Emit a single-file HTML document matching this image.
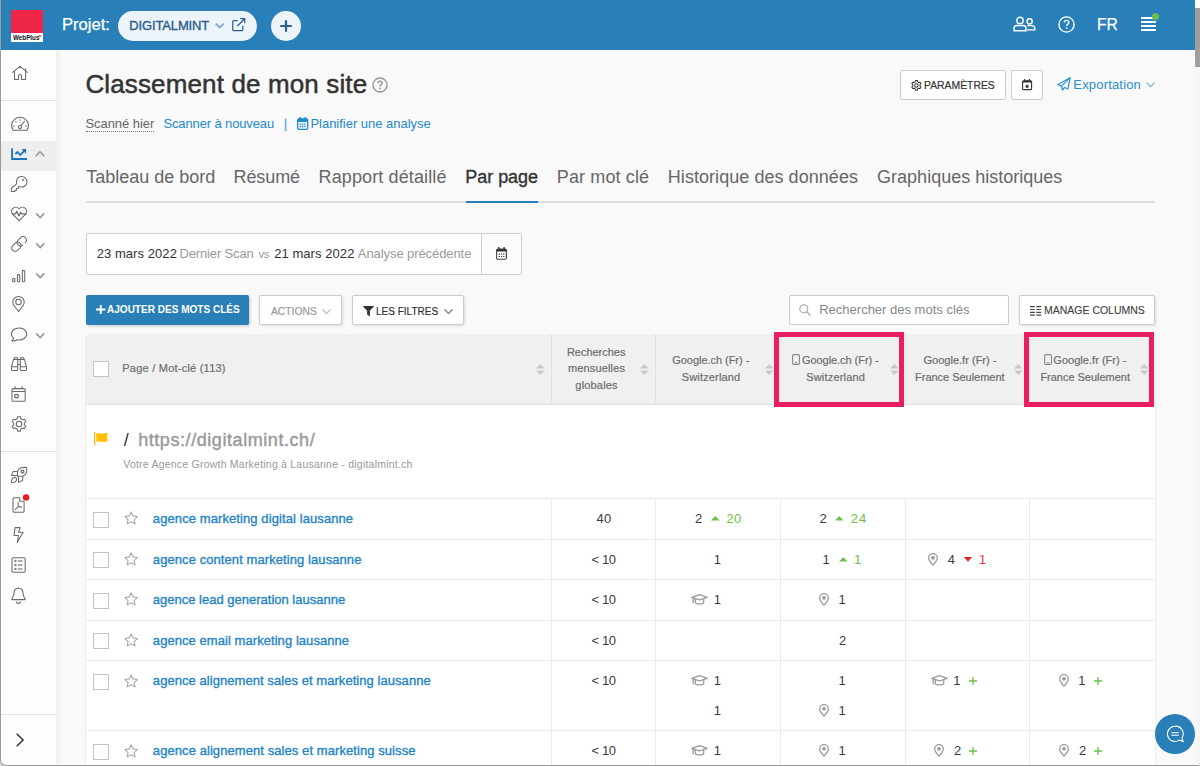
<!DOCTYPE html>
<html lang="fr">
<head>
<meta charset="utf-8">
<title>Classement de mon site</title>
<style>
*{box-sizing:border-box;margin:0;padding:0}
html,body{width:1200px;height:766px;overflow:hidden;background:#f9f9f9;font-family:"Liberation Sans",sans-serif;color:#333;font-size:13px}
body{position:relative}
.abs{position:absolute}
svg{display:block;overflow:visible;position:absolute}
.t{position:absolute;white-space:nowrap}
.m{-webkit-text-stroke:.35px currentColor}
/* window frame */
#frame-left{left:0;top:0;width:1200px;height:766px;border-left:1px solid #9a9a9a;border-bottom:1px solid #999;border-radius:0 0 3px 6px;box-shadow:0 0 0 8px #d4d7d7;z-index:50;pointer-events:none}
#frame-bottom{display:none}
#scroll{left:1195px;top:0;width:5px;height:766px;background:linear-gradient(#fbfbfb 0 8px,#f6f6f6 8px);z-index:40}
#scroll i{position:absolute;left:0;top:8px;width:5px;height:58.5px;background:#9e9e9e}
/* top bar */
#top{left:1px;top:0;width:1194px;height:50px;background:#2980b9;z-index:20}
#logo{left:10px;top:10px;width:32px;height:32px;background:#ee2547}
#logo b{position:absolute;left:0;bottom:0;width:32px;height:8.8px;background:#fff}
#logo i{position:absolute;left:28px;top:25px;width:2px;height:2px;border-radius:50%;background:#ee2547}
#projet{left:62px;top:13px;font-size:18px;line-height:22px;color:#fff;white-space:nowrap}
#pill{left:117px;top:11px;width:139px;height:30px;border-radius:15px;background:#ecf3f9;color:#2a5d8c;font-size:13px;line-height:30px;padding-left:13px;white-space:nowrap}
#plus{left:270px;top:10.7px;width:30px;height:30px;border-radius:15px;background:#ecf3f9}
#fr{left:1096px;top:14px;font-size:17px;line-height:20px;color:#fff}
/* sidebar */
#side{left:1px;top:50px;width:55px;height:716px;background:#fdfdfd;box-shadow:2px 0 6px rgba(0,0,0,.065);z-index:10}
#side .sep{position:absolute;left:0;width:55px;height:1px;background:#e0e0e0}
#side .act{position:absolute;left:0;top:91px;width:55px;height:30px;background:#eee}
/* content */
#main{left:0;top:0;width:1195px;height:766px}
h1{position:absolute;left:86px;top:68px;font-size:26px;line-height:32px;font-weight:400;color:#333;white-space:nowrap}
.btn{position:absolute;background:#fff;border:1px solid #ccc;border-radius:2px;font-size:12px;color:#333;white-space:nowrap;box-shadow:1px 1px 3px rgba(0,0,0,.12)}
.btn.ns{box-shadow:none}
a{color:#2188c9;text-decoration:none}
#sub span,#sub a{position:absolute;top:0;font-size:13px;line-height:18px;white-space:nowrap}
#sub{left:86px;top:115px;height:18px;width:400px}
#tabs{left:86px;top:158px;width:1069px;height:45px;border-bottom:2px solid #ddd}
#tabs span{position:absolute;top:6px;font-size:18px;line-height:26px;color:#666;white-space:nowrap}
#tabs span.on{color:#333}
#tabs i{position:absolute;left:380px;top:43px;width:71.5px;height:2px;background:#2980b9}
#date{left:86px;top:233px;width:436px;height:42px;background:#fff;border:1px solid #ccc;border-radius:2px;font-size:13px;color:#333}
#date span{position:absolute;top:0;line-height:40px;white-space:nowrap}
#date em{font-style:normal;color:#999}
#date .cal{position:absolute;left:394px;top:0;width:40px;height:40px;border-left:1px solid #ccc;background:#fcfcfc}
/* table */
#tbl{left:86px;top:334px;width:1069px;height:432px;background:#fff;box-shadow:-1px 0 0 #ececec,1px 0 0 #ececec}
#thead{left:0;top:0;width:1069px;height:70px;background:#f0f0f0;border-radius:3px 3px 0 0}
.th{position:absolute;font-size:11px;line-height:16.5px;color:#666;text-align:center;white-space:nowrap}
.hs{position:absolute;top:0;width:1px;height:70px;background:#e2e2e2}
.hl{position:absolute;border:5px solid #e91e63;z-index:5}
.hr{position:absolute;left:0;width:1069px;height:1px;background:#ebebeb}
.vl{position:absolute;top:215px;width:1px;height:217px;background:#ebebeb}
.cb{position:absolute;left:7px;width:16px;height:16px;border:1px solid #c4c4c4;background:#fff}
.kw{position:absolute;left:67px;font-size:14px;line-height:18px;color:#2484c6;white-space:nowrap}
.n{position:absolute;font-size:13px;line-height:18px;color:#333;white-space:nowrap}
.g{color:#6cc04a}
.r{color:#e53935}
#chat{left:1155px;top:714px;width:40px;height:40px;border-radius:20px;background:#2980b9;z-index:30}
</style>
</head>
<body>
<div id="frame-left" class="abs"></div>
<div id="frame-bottom" class="abs"></div>
<div id="scroll" class="abs"><i></i></div>
<div id="top" class="abs">
  <div id="logo" class="abs"><b></b><span class="t" style="left:1.69px;top:21px;font-size:7.2px;line-height:13px;color:#111;transform:scaleX(0.8757);transform-origin:0 0;font-weight:700">WebPlus</span><i></i></div>
  <span class="t" style="left:61.24px;top:13px;font-size:17px;line-height:23px;color:#fff;transform:scaleX(0.9765);transform-origin:0 0;-webkit-text-stroke:.25px #fff">Projet:</span>
  <div id="pill" class="abs"><span class="t m" style="left:11.23px;top:5px;font-size:13px;line-height:19px;color:#2a5d8c;letter-spacing:-0.131px">DIGITALMINT</span>
    <svg style="left:96.5px;top:12.3px" width="9.4" height="5.6" viewBox="0 0 10 6"><path d="M0.7 0.7 L5 5 L9.3 0.7" fill="none" stroke="#7ea3c4" stroke-width="1.7"/></svg>
    <svg style="left:114px;top:7.3px" width="13.4" height="13.4" viewBox="0 0 14 14"><path d="M11.3 8v4.2a1 1 0 0 1-1 1H1.8a1 1 0 0 1-1-1V3.7a1 1 0 0 1 1-1H6" fill="none" stroke="#2a5d8c" stroke-width="1.3"/><path d="M8.6 0.7h4.7v4.7M13.2 0.8L5.6 8.4" fill="none" stroke="#2a5d8c" stroke-width="1.3"/></svg>
  </div>
  <div id="plus" class="abs"><svg style="left:9px;top:9px" width="12" height="12" viewBox="0 0 12 12"><path d="M6 0.3v11.4M0.3 6h11.4" stroke="#2a5d8c" stroke-width="2.2" fill="none"/></svg></div>
  <svg style="left:1012px;top:16px" width="23" height="16" viewBox="0 0 23 16"><g fill="none" stroke="#fff" stroke-width="1.4"><circle cx="7" cy="4.4" r="3.2"/><path d="M1 14.8v-2.3c0-1.7 1.4-3 3-3h6c1.7 0 3 1.3 3 3v2.3z"/><circle cx="16.6" cy="5.4" r="2.6"/><path d="M14.2 9.6h4.6c1.7 0 3 1.3 3 2.9v1.4h-7.6"/></g></svg>
  <svg style="left:1057px;top:16px" width="17" height="17" viewBox="0 0 17 17"><circle cx="8.5" cy="8.5" r="7.6" fill="none" stroke="#fff" stroke-width="1.4"/><path d="M6.3 6.6c0-1.3 1-2.2 2.3-2.2s2.2.9 2.2 2c0 1.7-2.2 1.7-2.2 3.6" fill="none" stroke="#fff" stroke-width="1.4"/><circle cx="8.6" cy="12.1" r=".95" fill="#fff"/></svg>
  <span class="t" style="left:1096.42px;top:13px;font-size:17px;line-height:23px;color:#fff;transform:scaleX(0.9181);transform-origin:0 0;-webkit-text-stroke:.25px #fff">FR</span>
  <div class="abs" style="left:1140px;top:17px;width:15px;height:14px;background:linear-gradient(#fff 0 2px,transparent 2px 4px,#fff 4px 6px,transparent 6px 8px,#fff 8px 10px,transparent 10px 12px,#fff 12px 14px)"></div>
  <div class="abs" style="left:1150.5px;top:12.5px;width:7px;height:7px;border-radius:50%;background:#6cc04a"></div>
</div>
<div id="side" class="abs">
  <div class="sep" style="top:50px"></div>
  <div class="act"></div>
  <div class="sep" style="top:401px"></div>
  <div class="sep" style="top:664px"></div>
  <svg style="left:-1px;top:-50px" width="56" height="766" viewBox="0 0 56 766" fill="none" stroke="#6a6a6a" stroke-width="1.05" stroke-linejoin="round">
    <!-- home -->
    <path d="M12.3 72.7L20 66.3L27.8 72.7M25.5 68.3V70.8M14.5 71.3V79.4H18.6V75.6a.8.8 0 0 1 .8-.8h1.3a.8.8 0 0 1 .8.8V79.4H25.6V71.3"/>
    <!-- gauge -->
    <path d="M13.1 130.3a8.4 8.4 0 1 1 13.9 0z"/>
    <circle cx="20" cy="127" r="1.6"/><path d="M21.1 125.8L24.5 121.2" stroke-linecap="round"/>
    <g fill="#999" stroke="none"><rect x="19.3" y="119.3" width="1.5" height="1.5"/><rect x="15.1" y="121" width="1.4" height="1.4"/><rect x="13.2" y="125.3" width="1.5" height="1.5"/><rect x="25.3" y="125.3" width="1.5" height="1.5"/></g>
    <!-- chart line (active) -->
    <g stroke="#1a73bc" fill="none"><path d="M12.1 148.2V159H27" stroke-width="1.8" stroke-linejoin="miter"/><path d="M15.4 154.2L17.4 152L20.2 155L24.2 150.8" stroke-width="1.8" stroke-linejoin="miter"/><path d="M21.6 149.1H26.1V153.7z" fill="#1a73bc" stroke="none"/></g>
    <path d="M35.8 156.1L40 151.8L44.2 156.1" stroke="#999" stroke-width="1.6"/>
    <!-- key -->
    <path d="M16.7 183.6a5.3 5.3 0 1 1 3.3 3.2h-1.7v1.7h-1.8v1.7h-1.7v1.4h-3.5v-3.1z"/>
    <circle cx="22.9" cy="180" r="1.3" fill="#999" stroke="none"/>
    <!-- heartbeat -->
    <path d="M19.1 220.7L12.8 214.4a4.1 4.1 0 0 1 5.8-5.9l.5.5.5-.5a4.1 4.1 0 0 1 5.8 5.9z"/>
    <path d="M12 213.8h3.6l1.2-2.6 2.1 4.7 1.8-3.6.7 1.5h5" stroke-width="1.2"/>
    <path d="M36.2 213.4L40.2 217.60000000000002L44.2 213.4" stroke="#999" stroke-width="1.6"/>
    <!-- link -->
    <rect x="11.3" y="243.4" width="10.2" height="6.8" rx="3.4" transform="rotate(-45 16.4 246.8)"/><path d="M20.3 244.7h-.2a3.4 3.4 0 0 1-3.4-3.4 3.4 3.4 0 0 1 3.4-3.4h3.4a3.4 3.4 0 0 1 3.4 3.4 3.4 3.4 0 0 1-3.4 3.4h-.6" transform="rotate(-45 21.8 241.3)"/>
    <path d="M36.2 243.4L40.2 247.60000000000002L44.2 243.4" stroke="#999" stroke-width="1.6"/>
    <!-- bars -->
    <rect x="12.6" y="278.5" width="2.3" height="3.3" rx=".5"/><rect x="17.4" y="274.6" width="2.3" height="7.2" rx=".5"/><rect x="22.4" y="270.6" width="2.3" height="11.2" rx=".5"/>
    <path d="M36.2 273.40000000000003L40.2 277.6L44.2 273.40000000000003" stroke="#999" stroke-width="1.6"/>
    <!-- pin -->
    <path d="M18.5 311.5C16.5 308.5 12.8 305.5 12.8 302.2a5.7 5.7 0 0 1 11.4 0c0 3.3-3.7 6.3-5.7 9.3z"/><circle cx="18.5" cy="302" r="2.7"/>
    <!-- comment -->
    <path d="M13.6 338.1a7.6 6 0 1 1 3.7 1.7c-1.5 1-3 1.3-5.4 1.1 1-.8 1.5-1.7 1.7-2.8z"/>
    <path d="M36.2 333.40000000000003L40.2 337.6L44.2 333.40000000000003" stroke="#999" stroke-width="1.6"/>
    <!-- binoculars -->
    <path d="M14.2 359.4v-1.6h3.4v1.6M20.4 359.4v-1.6h3.4v1.6M13.6 359.4h4.1v10.3a.9.9 0 0 1-.9.9h-4.3a.9.9 0 0 1-.9-.9v-3.3zM24.4 359.4h-4.1v10.3a.9.9 0 0 0 .9.9h4.3a.9.9 0 0 0 .9-.9v-3.3zM11.6 366.8h6.1M20.3 366.8h6.1M17.7 359.4h2.6M17.7 364.4h2.6"/>
    <!-- calendar -->
    <rect x="12" y="388.6" width="13.2" height="12.7" rx="1.4"/><path d="M12 391.4h13.2M15 386.2v2.4M22.1 386.2v2.4" /><rect x="14.8" y="394.6" width="3.4" height="3" rx=".4" stroke-width="1.2"/>
    <!-- gear -->
    <path d="M17.7 416.7h2.6l.6 2.1 1.5.9 2.1-.5 1.3 2.2-1.5 1.6v1.8l1.5 1.6-1.3 2.2-2.1-.5-1.5.9-.6 2.1h-2.6l-.6-2.1-1.5-.9-2.1.5-1.3-2.2 1.5-1.6v-1.8l-1.5-1.6 1.3-2.2 2.1.5 1.5-.9z"/><circle cx="19" cy="424" r="2.7"/>
    <!-- rocket -->
    <path d="M21 467.7C23 467.4 25.3 467.3 26.7 467.5C26.9 469 26.9 470.8 26.5 472.3C25.9 474.3 24.6 475.6 22.8 476.3L17.5 476.3L17.5 471.4C18.2 469.6 19.3 468.3 21 467.7Z"/><rect x="21.2" y="470.3" width="2.6" height="2.5" rx=".7" stroke-width="1.2"/>
    <path d="M17.4 471.4H13.3L11.5 475.4H17.4M22.7 476.4V480.3L18.5 482.4V476.4"/><path d="M11.5 482.5C11.2 480.3 11.9 477.6 14.4 477.4C15.8 477.3 16.7 478.1 16.6 479.5C16.4 481.8 14 482.7 11.5 482.5Z"/>
    <!-- pdf -->
    <path d="M19.8 497.8h-5.7a1.1 1.1 0 0 0-1.1 1.1v12.2a1.1 1.1 0 0 0 1.1 1.1h8.9a1.1 1.1 0 0 0 1.1-1.1v-9.8h-4.3z"/><path d="M18 502.4c.3 1.6.3 2.9.1 4.1m0 0c-.8 1.3-1.8 2.3-3 3.3m3-3.3c1.3.3 2.4.5 3.6.5" stroke-linecap="round"/>
    <circle cx="26.1" cy="497.4" r="3.2" fill="#e0201c" stroke="none"/>
    <!-- bolt -->
    <path d="M15 527.6h5.2l-1.6 4.7h4.5l-5.9 10.2 1.3-7h-4.5z"/>
    <!-- list -->
    <rect x="12" y="557.8" width="13.2" height="14.4" rx="1.2"/><g fill="#888" stroke="none"><circle cx="15.4" cy="561" r="1.3"/><circle cx="15.4" cy="565" r="1.3"/><circle cx="15.4" cy="569" r="1.3"/><rect x="18" y="560.3" width="4.5" height="1.4"/><rect x="18" y="564.3" width="4.5" height="1.4"/><rect x="18" y="568.3" width="4.5" height="1.4"/></g>
    <!-- bell -->
    <path d="M18.5 587.4v.9M18.5 588.3c-2.9 0-4.5 2.1-4.5 4.8 0 3.5-1.1 4.5-2.2 5.7-.3.4 0 .8.5.8h12.4c.5 0 .8-.4.5-.8-1.1-1.2-2.2-2.2-2.2-5.7 0-2.7-1.6-4.8-4.5-4.8zM16.5 601.5a2 2 0 0 0 4 0"/>
    <!-- chevron right -->
    <path d="M16.7 733.7L23.1 740L16.7 746.3" stroke="#333" stroke-width="1.5" stroke-linejoin="miter"/>
  </svg>
</div>
<div id="main" class="abs">

<span class="t m" style="left:85.38px;top:67px;font-size:26px;line-height:34px;color:#333;letter-spacing:0.137px;-webkit-text-stroke-width:.5px">Classement de mon site</span>
<svg style="left:372px;top:77px" width="16" height="16" viewBox="0 0 16 16"><circle cx="8" cy="8" r="7" fill="none" stroke="#999" stroke-width="1.4"/><path d="M5.9 6.3c0-1.2.9-2 2.1-2s2.1.8 2.1 1.9c0 1.5-2.1 1.6-2.1 3.2" fill="none" stroke="#999" stroke-width="1.5"/><circle cx="8" cy="11.5" r=".95" fill="#999"/></svg>

<div class="btn ns" style="left:900px;top:70px;width:106px;height:30px">
  <svg style="left:10.3px;top:8.7px" width="10.8" height="10.8" viewBox="11 416 16 16"><path d="M17.7 416.7h2.6l.6 2.1 1.5.9 2.1-.5 1.3 2.2-1.5 1.6v1.8l1.5 1.6-1.3 2.2-2.1-.5-1.5.9-.6 2.1h-2.6l-.6-2.1-1.5-.9-2.1.5-1.3-2.2 1.5-1.6v-1.8l-1.5-1.6 1.3-2.2 2.1.5 1.5-.9z" fill="none" stroke="#333" stroke-width="1.5" stroke-linejoin="round"/><circle cx="19" cy="424" r="2.6" fill="none" stroke="#333" stroke-width="1.5"/></svg>
  <span class="t" style="left:23.45px;top:6px;font-size:11px;line-height:16px;color:#333;transform:scaleX(0.9433);transform-origin:0 0;-webkit-text-stroke:.2px #333">PARAMÈTRES</span>
</div>
<div class="btn ns" style="left:1011px;top:70px;width:32px;height:30px">
  <svg style="left:10.2px;top:8.3px" width="10.2" height="11.3" viewBox="0 0 11 12"><rect x=".65" y="1.9" width="9.7" height="9.5" rx="1.1" fill="none" stroke="#333" stroke-width="1.2"/><path d="M.65 2.9a1 1 0 0 1 1-1h7.7a1 1 0 0 1 1 1v.9H.65z" fill="#333"/><path d="M3 0v2.5M8 0v2.5" stroke="#333" stroke-width="1.3"/><path d="M5.5 5.4l.75 1.5 1.65.2-1.2 1.15.3 1.65-1.5-.8-1.5.8.3-1.65-1.2-1.15 1.65-.2z" fill="#333"/></svg>
</div>
<svg style="left:1057px;top:77px" width="14" height="14" viewBox="0 0 14 14"><path d="M13.2.7L.9 7.6l3.6 1.6 1 3.8 2.2-2.5 3.2 1.5z" fill="none" stroke="#2a8fd0" stroke-width="1.2" stroke-linejoin="round"/><path d="M13.2.7L4.5 9.2" fill="none" stroke="#2a8fd0" stroke-width="1.1"/></svg>
<span class="t" style="left:1073.33px;top:75px;font-size:13px;line-height:19px;color:#2a8fd0;letter-spacing:0.175px">Exportation</span>
<svg style="left:1146px;top:82px" width="9" height="6" viewBox="0 0 9 6"><path d="M.5.6l4 4 4-4" fill="none" stroke="#6fb3e0" stroke-width="1.3"/></svg>

<span class="t" style="left:85.41px;top:114px;font-size:13px;line-height:19px;color:#666;letter-spacing:-0.057px">Scanné hier</span>
<div class="abs" style="left:86px;top:130.5px;width:68px;height:0;border-top:1px dotted #777"></div>
<span class="t" style="left:163.41px;top:114px;font-size:13px;line-height:19px;color:#2389cd;letter-spacing:-0.125px">Scanner à nouveau</span>
<span class="t" style="left:283.76px;top:114px;font-size:13px;line-height:19px;color:#5aa7d8;-webkit-text-stroke:.3px #5aa7d8">|</span>
<svg style="left:296.6px;top:116.5px" width="11.4" height="13" viewBox="0 0 11.4 13"><rect x=".65" y="1.9" width="10.1" height="10.4" rx="1.4" fill="none" stroke="#2389cd" stroke-width="1.3"/><path d="M.65 3.2a1.4 1.4 0 0 1 1.4-1.4h7.3a1.4 1.4 0 0 1 1.4 1.4v1.9H.65z" fill="#2389cd"/><path d="M3.1 0v2.4M8.3 0v2.4" stroke="#2389cd" stroke-width="1.5"/><path d="M2.7 7.1h1.5M4.95 7.1h1.5M7.2 7.1h1.5M2.7 9.5h1.5M4.95 9.5h1.5M7.2 9.5h1.5" stroke="#2389cd" stroke-width="1.4"/></svg>
<span class="t" style="left:310.43px;top:114px;font-size:13px;line-height:19px;color:#2389cd;letter-spacing:-0.017px">Planifier une analyse</span>

<div id="tabs" class="abs"><i></i></div>
<span class="t" style="left:86.3px;top:165px;font-size:18px;line-height:24px;color:#666;letter-spacing:-0.017px">Tableau de bord</span>
<span class="t" style="left:233.52px;top:165px;font-size:18px;line-height:24px;color:#666;letter-spacing:-0.09px">Résumé</span>
<span class="t" style="left:318.52px;top:165px;font-size:18px;line-height:24px;color:#666;letter-spacing:0.126px">Rapport détaillé</span>
<span class="t m" style="left:465.22px;top:165px;font-size:18px;line-height:24px;color:#333;letter-spacing:-0.025px">Par page</span>
<span class="t" style="left:556.82px;top:165px;font-size:18px;line-height:24px;color:#666;letter-spacing:0.125px">Par mot clé</span>
<span class="t" style="left:667.82px;top:165px;font-size:18px;line-height:24px;color:#666;letter-spacing:0.048px">Historique des données</span>
<span class="t" style="left:877.09px;top:165px;font-size:18px;line-height:24px;color:#666;letter-spacing:0.007px">Graphiques historiques</span>

<div id="date" class="abs">
  <div class="cal"><svg style="left:14.3px;top:12.6px" width="11" height="13" viewBox="0 0 11 13"><rect x=".6" y="2" width="9.8" height="10.3" rx="1.2" fill="none" stroke="#444" stroke-width="1.1"/><path d="M.6 3a1 1 0 0 1 1-1h7.8a1 1 0 0 1 1 1v1.6H.6z" fill="#333"/><path d="M2.9 0v2.5M8.1 0v2.5" stroke="#333" stroke-width="1.3"/><path d="M2.6 7.1h1.3M4.85 7.1h1.3M7.1 7.1h1.3M2.6 9.5h1.3M4.85 9.5h1.3M7.1 9.5h1.3" stroke="#444" stroke-width="1.2"/></svg></div>
</div>
<span class="t" style="left:96.65px;top:244px;font-size:13px;line-height:19px;color:#333;letter-spacing:0.07px">23 mars 2022</span>
<span class="t" style="left:179.53px;top:244px;font-size:13px;line-height:19px;color:#999;letter-spacing:-0.151px">Dernier Scan</span>
<span class="t" style="left:258.46px;top:246px;font-size:11.5px;line-height:16px;color:#999;letter-spacing:-0.345px">vs</span>
<span class="t" style="left:274.15px;top:244px;font-size:13px;line-height:19px;color:#333;letter-spacing:0.07px">21 mars 2022</span>
<span class="t" style="left:357.87px;top:244px;font-size:13px;line-height:19px;color:#999;letter-spacing:-0.083px">Analyse précédente</span>

<div class="abs" style="left:86px;top:295px;width:163px;height:30px;background:#2980b9;border-radius:2px;box-shadow:1px 1px 3px rgba(0,0,0,.2)">
  <svg style="left:9.5px;top:9.5px" width="9.5" height="9" viewBox="0 0 9.5 9"><path d="M4.75 0v9M0 4.5h9.5" stroke="#fff" stroke-width="1.9"/></svg>
</div>
<span class="t" style="left:106.95px;top:301px;font-size:11px;line-height:16px;color:#fff;transform:scaleX(0.9119);transform-origin:0 0;font-weight:700">AJOUTER DES MOTS CLÉS</span>
<div class="btn" style="left:259px;top:295px;width:83px;height:30px">
  <svg style="left:62px;top:12.5px" width="9" height="5.5" viewBox="0 0 9 5.5"><path d="M.5.5l4 4 4-4" fill="none" stroke="#c4c4c4" stroke-width="1.5"/></svg>
</div>
<span class="t" style="left:270.68px;top:303px;font-size:11px;line-height:16px;color:#999;transform:scaleX(0.9366);transform-origin:0 0;-webkit-text-stroke:.2px #999">ACTIONS</span>
<div class="btn" style="left:352px;top:295px;width:112px;height:30px">
  <svg style="left:10.3px;top:9.6px" width="11" height="10.5" viewBox="0 0 11 10.5"><path d="M.3 0h10.4c.3 0 .4.3.2.5L6.9 4.7V10.5L4.1 8.5V4.7L.1.5C-.1.3 0 0 .3 0z" fill="#333"/></svg>
  <svg style="left:91px;top:12.5px" width="9" height="5.5" viewBox="0 0 9 5.5"><path d="M.5.5l4 4 4-4" fill="none" stroke="#888" stroke-width="1.5"/></svg>
</div>
<span class="t" style="left:376.48px;top:303px;font-size:11px;line-height:16px;color:#333;transform:scaleX(0.9094);transform-origin:0 0;-webkit-text-stroke:.2px #333">LES FILTRES</span>
<div class="abs" style="left:789px;top:295px;width:220px;height:30px;background:#fff;border:1px solid #ccc;border-radius:2px">
  <svg style="left:9.3px;top:8px" width="12" height="12" viewBox="0 0 13 13"><circle cx="5.2" cy="5.2" r="4.3" fill="none" stroke="#aaa" stroke-width="1.3"/><path d="M8.4 8.4l4 4" stroke="#aaa" stroke-width="1.4"/></svg>
</div>
<span class="t" style="left:819.23px;top:300px;font-size:13px;line-height:19px;color:#888">Rechercher des mots clés</span>
<div class="btn" style="left:1019px;top:295px;width:136px;height:30px">
  <svg style="left:9.7px;top:9.5px" width="11.2" height="10" viewBox="0 0 11.2 10"><path d="M0 .7h4.8M0 3.5h4.8M0 6.3h4.8M0 9.1h4.8M6.4 .7h4.8M6.4 3.5h4.8M6.4 6.3h4.8M6.4 9.1h4.8" stroke="#444" stroke-width="1.2"/></svg>
</div>
<span class="t" style="left:1043.64px;top:302px;font-size:11px;line-height:16px;color:#3a3a3a;transform:scaleX(0.9537);transform-origin:0 0;-webkit-text-stroke:.1px #3a3a3a">MANAGE COLUMNS</span>

<div id="tbl" class="abs">
<div id="thead" class="abs"></div>
<div class="hs" style="left:465px"></div>
<div class="vl" style="left:465px;top:164px;height:268px"></div>
<div class="hs" style="left:569px"></div>
<div class="vl" style="left:569px;top:164px;height:268px"></div>
<div class="hs" style="left:694px"></div>
<div class="vl" style="left:694px;top:164px;height:268px"></div>
<div class="hs" style="left:819px"></div>
<div class="vl" style="left:819px;top:164px;height:268px"></div>
<div class="hs" style="left:943px"></div>
<div class="vl" style="left:943px;top:164px;height:268px"></div>
<div class="hr" style="top:70px;background:#e0e0e0"></div>
<div class="hr" style="top:164px"></div>
<div class="hr" style="top:205px"></div>
<div class="hr" style="top:245px"></div>
<div class="hr" style="top:286px"></div>
<div class="hr" style="top:326px"></div>
<div class="hr" style="top:396px"></div>
<div class="cb" style="top:27px"></div>
<span class="t m" style="left:36.3px;top:26px;font-size:11px;line-height:16px;color:#6c6c6c;letter-spacing:0.229px;-webkit-text-stroke-width:.2px">Page / Mot-clé (113)</span>
<svg style="left:449.5px;top:30px" width="8.5" height="11" viewBox="0 0 8.5 11"><path d="M4.25 0L8.5 4.6H0z" fill="#c8c8c8"/><path d="M0 6.4h8.5L4.25 11z" fill="#c8c8c8"/></svg>
<span class="t m" style="left:480.9px;top:10px;font-size:11px;line-height:16px;color:#6c6c6c;letter-spacing:-0.022px;-webkit-text-stroke-width:.2px">Recherches</span>
<span class="t m" style="left:481.97px;top:26px;font-size:11px;line-height:16px;color:#6c6c6c;letter-spacing:0.143px;-webkit-text-stroke-width:.2px">mensuelles</span>
<span class="t m" style="left:489.34px;top:43px;font-size:11px;line-height:16px;color:#6c6c6c;letter-spacing:0.183px;-webkit-text-stroke-width:.2px">globales</span>
<svg style="left:553.7px;top:30px" width="8.5" height="11" viewBox="0 0 8.5 11"><path d="M4.25 0L8.5 4.6H0z" fill="#c8c8c8"/><path d="M0 6.4h8.5L4.25 11z" fill="#c8c8c8"/></svg>
<span class="t m" style="left:586.25px;top:18px;font-size:11px;line-height:16px;color:#6c6c6c;letter-spacing:-0.039px;-webkit-text-stroke-width:.2px">Google.ch (Fr) -</span>
<span class="t m" style="left:595.7px;top:35px;font-size:11px;line-height:16px;color:#6c6c6c;letter-spacing:0.165px;-webkit-text-stroke-width:.2px">Switzerland</span>
<svg style="left:678.8px;top:30px" width="8.5" height="11" viewBox="0 0 8.5 11"><path d="M4.25 0L8.5 4.6H0z" fill="#c8c8c8"/><path d="M0 6.4h8.5L4.25 11z" fill="#c8c8c8"/></svg>
<svg style="left:705.5px;top:20.3px" width="8" height="11" viewBox="0 0 8 11"><rect x=".6" y=".6" width="6.8" height="9.8" rx="1.2" fill="none" stroke="#888" stroke-width="1.1"/><path d="M2.8 8.7h2.4" stroke="#888" stroke-width="1"/></svg>
<span class="t m" style="left:715.95px;top:18px;font-size:11px;line-height:16px;color:#6c6c6c;letter-spacing:-0.052px;-webkit-text-stroke-width:.2px">Google.ch (Fr) -</span>
<span class="t m" style="left:720.2px;top:35px;font-size:11px;line-height:16px;color:#6c6c6c;letter-spacing:0.185px;-webkit-text-stroke-width:.2px">Switzerland</span>
<svg style="left:803.7px;top:30px" width="8.5" height="11" viewBox="0 0 8.5 11"><path d="M4.25 0L8.5 4.6H0z" fill="#c8c8c8"/><path d="M0 6.4h8.5L4.25 11z" fill="#c8c8c8"/></svg>
<span class="t m" style="left:837.45px;top:18px;font-size:11px;line-height:16px;color:#6c6c6c;letter-spacing:0.021px;-webkit-text-stroke-width:.2px">Google.fr (Fr) -</span>
<span class="t m" style="left:829.1px;top:35px;font-size:11px;line-height:16px;color:#6c6c6c;letter-spacing:-0.026px;-webkit-text-stroke-width:.2px">France Seulement</span>
<svg style="left:927.5px;top:30px" width="8.5" height="11" viewBox="0 0 8.5 11"><path d="M4.25 0L8.5 4.6H0z" fill="#c8c8c8"/><path d="M0 6.4h8.5L4.25 11z" fill="#c8c8c8"/></svg>
<svg style="left:957.5px;top:20.3px" width="8" height="11" viewBox="0 0 8 11"><rect x=".6" y=".6" width="6.8" height="9.8" rx="1.2" fill="none" stroke="#888" stroke-width="1.1"/><path d="M2.8 8.7h2.4" stroke="#888" stroke-width="1"/></svg>
<span class="t m" style="left:967.35px;top:18px;font-size:11px;line-height:16px;color:#6c6c6c;letter-spacing:0.027px;-webkit-text-stroke-width:.2px">Google.fr (Fr) -</span>
<span class="t m" style="left:954.4px;top:35px;font-size:11px;line-height:16px;color:#6c6c6c;letter-spacing:-0.02px;-webkit-text-stroke-width:.2px">France Seulement</span>
<svg style="left:1053.8px;top:30px" width="8.5" height="11" viewBox="0 0 8.5 11"><path d="M4.25 0L8.5 4.6H0z" fill="#c8c8c8"/><path d="M0 6.4h8.5L4.25 11z" fill="#c8c8c8"/></svg>
<div class="hl" style="left:688px;top:-2px;width:130px;height:75px"></div>
<div class="hl" style="left:938px;top:-2px;width:130px;height:75px"></div>
<svg style="left:8px;top:98px" width="14" height="14" viewBox="0 0 14 14"><path d="M.6 0v13.5" stroke="#f6b21b" stroke-width="1.3"/><path d="M2.3 1.2c2-.9 3.6.5 5.5.5 1.4 0 2.6-.6 5.5-.6v8.3c-2 .2-3.3.6-5.1.6-2 0-3.6-1.1-5.9-.3z" fill="#ffc107"/></svg>
<span class="t" style="left:37.75px;top:94px;font-size:18px;line-height:24px;color:#333">/</span>
<span class="t m" style="left:52.15px;top:94px;font-size:18px;line-height:24px;color:#999;letter-spacing:0.567px;-webkit-text-stroke-width:.4px">https://digitalmint.ch/</span>
<span class="t" style="left:37.25px;top:122px;font-size:10.5px;line-height:16px;color:#999;letter-spacing:0.223px">Votre Agence Growth Marketing à Lausanne - digitalmint.ch</span>
<div class="cb" style="top:178px"></div>
<svg style="left:37.9px;top:177.2px" width="14.3" height="14.3" viewBox="0 0 14 14"><path d="M7 .9l1.9 3.9 4.2.6-3.1 3 .8 4.2L7 10.6l-3.8 2 .8-4.2-3.1-3 4.2-.6z" fill="none" stroke="#a6a6a6" stroke-width="1.05" stroke-linejoin="round"/></svg>
<span class="t m" style="left:66.85px;top:175px;font-size:13px;line-height:19px;color:#2484c6;letter-spacing:0.092px;-webkit-text-stroke-width:.35px">agence marketing digital lausanne</span>
<span class="t" style="left:510.5px;top:175px;font-size:13px;line-height:19px;color:#3c3c3c;letter-spacing:0.146px">40</span>
<div class="cb" style="top:218px"></div>
<svg style="left:37.9px;top:218.3px" width="14.3" height="14.3" viewBox="0 0 14 14"><path d="M7 .9l1.9 3.9 4.2.6-3.1 3 .8 4.2L7 10.6l-3.8 2 .8-4.2-3.1-3 4.2-.6z" fill="none" stroke="#a6a6a6" stroke-width="1.05" stroke-linejoin="round"/></svg>
<span class="t m" style="left:66.85px;top:216px;font-size:13px;line-height:19px;color:#2484c6;letter-spacing:0.08px;-webkit-text-stroke-width:.35px">agence content marketing lausanne</span>
<span class="t" style="left:505.56px;top:216px;font-size:13px;line-height:19px;color:#3c3c3c;letter-spacing:-0.372px">&lt; 10</span>
<div class="cb" style="top:259px"></div>
<svg style="left:37.9px;top:258.3px" width="14.3" height="14.3" viewBox="0 0 14 14"><path d="M7 .9l1.9 3.9 4.2.6-3.1 3 .8 4.2L7 10.6l-3.8 2 .8-4.2-3.1-3 4.2-.6z" fill="none" stroke="#a6a6a6" stroke-width="1.05" stroke-linejoin="round"/></svg>
<span class="t m" style="left:66.85px;top:256px;font-size:13px;line-height:19px;color:#2484c6;-webkit-text-stroke-width:.35px">agence lead generation lausanne</span>
<span class="t" style="left:505.56px;top:256px;font-size:13px;line-height:19px;color:#3c3c3c;letter-spacing:-0.372px">&lt; 10</span>
<div class="cb" style="top:299px"></div>
<svg style="left:37.9px;top:299.2px" width="14.3" height="14.3" viewBox="0 0 14 14"><path d="M7 .9l1.9 3.9 4.2.6-3.1 3 .8 4.2L7 10.6l-3.8 2 .8-4.2-3.1-3 4.2-.6z" fill="none" stroke="#a6a6a6" stroke-width="1.05" stroke-linejoin="round"/></svg>
<span class="t m" style="left:66.85px;top:297px;font-size:13px;line-height:19px;color:#2484c6;letter-spacing:0.061px;-webkit-text-stroke-width:.35px">agence email marketing lausanne</span>
<span class="t" style="left:505.56px;top:297px;font-size:13px;line-height:19px;color:#3c3c3c;letter-spacing:-0.372px">&lt; 10</span>
<div class="cb" style="top:340px"></div>
<svg style="left:37.9px;top:339.8px" width="14.3" height="14.3" viewBox="0 0 14 14"><path d="M7 .9l1.9 3.9 4.2.6-3.1 3 .8 4.2L7 10.6l-3.8 2 .8-4.2-3.1-3 4.2-.6z" fill="none" stroke="#a6a6a6" stroke-width="1.05" stroke-linejoin="round"/></svg>
<span class="t m" style="left:66.85px;top:337px;font-size:13px;line-height:19px;color:#2484c6;letter-spacing:0.057px;-webkit-text-stroke-width:.35px">agence alignement sales et marketing lausanne</span>
<span class="t" style="left:505.56px;top:337px;font-size:13px;line-height:19px;color:#3c3c3c;letter-spacing:-0.372px">&lt; 10</span>
<div class="cb" style="top:410px"></div>
<svg style="left:37.9px;top:409.8px" width="14.3" height="14.3" viewBox="0 0 14 14"><path d="M7 .9l1.9 3.9 4.2.6-3.1 3 .8 4.2L7 10.6l-3.8 2 .8-4.2-3.1-3 4.2-.6z" fill="none" stroke="#a6a6a6" stroke-width="1.05" stroke-linejoin="round"/></svg>
<span class="t m" style="left:66.85px;top:407px;font-size:13px;line-height:19px;color:#2484c6;letter-spacing:0.076px;-webkit-text-stroke-width:.35px">agence alignement sales et marketing suisse</span>
<span class="t" style="left:505.56px;top:407px;font-size:13px;line-height:19px;color:#3c3c3c;letter-spacing:-0.372px">&lt; 10</span>
<span class="t" style="left:609.04px;top:175px;font-size:13px;line-height:19px;color:#3c3c3c">2</span>
<svg style="left:624.6px;top:182px" width="8.5" height="4.5" viewBox="0 0 8.5 4.5"><path d="M4.25 0L8.5 4.5H0z" fill="#6cc04a"/></svg>
<span class="t" style="left:640.55px;top:175px;font-size:13px;line-height:19px;color:#6cc04a;letter-spacing:0.302px">20</span>
<span class="t" style="left:627.81px;top:216px;font-size:13px;line-height:19px;color:#3c3c3c">1</span>
<svg style="left:605px;top:260px" width="17" height="11" viewBox="0 0 17 11"><path d="M8.5 0.7L16.2 3.3 8.5 5.9 0.8 3.3z" fill="none" stroke="#9a9a9a" stroke-width="1.3" stroke-linejoin="round"/><path d="M4.3 4.8v3.1c0 1.1 1.9 2 4.2 2s4.2-.9 4.2-2V4.8" fill="none" stroke="#9a9a9a" stroke-width="1.3"/><path d="M2.2 3.8v5.4" fill="none" stroke="#9a9a9a" stroke-width="1.3"/></svg>
<span class="t" style="left:627.81px;top:256px;font-size:13px;line-height:19px;color:#3c3c3c">1</span>
<svg style="left:605px;top:341px" width="17" height="11" viewBox="0 0 17 11"><path d="M8.5 0.7L16.2 3.3 8.5 5.9 0.8 3.3z" fill="none" stroke="#9a9a9a" stroke-width="1.3" stroke-linejoin="round"/><path d="M4.3 4.8v3.1c0 1.1 1.9 2 4.2 2s4.2-.9 4.2-2V4.8" fill="none" stroke="#9a9a9a" stroke-width="1.3"/><path d="M2.2 3.8v5.4" fill="none" stroke="#9a9a9a" stroke-width="1.3"/></svg>
<span class="t" style="left:627.81px;top:337px;font-size:13px;line-height:19px;color:#3c3c3c">1</span>
<span class="t" style="left:627.81px;top:367px;font-size:13px;line-height:19px;color:#3c3c3c">1</span>
<svg style="left:605px;top:411px" width="17" height="11" viewBox="0 0 17 11"><path d="M8.5 0.7L16.2 3.3 8.5 5.9 0.8 3.3z" fill="none" stroke="#9a9a9a" stroke-width="1.3" stroke-linejoin="round"/><path d="M4.3 4.8v3.1c0 1.1 1.9 2 4.2 2s4.2-.9 4.2-2V4.8" fill="none" stroke="#9a9a9a" stroke-width="1.3"/><path d="M2.2 3.8v5.4" fill="none" stroke="#9a9a9a" stroke-width="1.3"/></svg>
<span class="t" style="left:627.81px;top:407px;font-size:13px;line-height:19px;color:#3c3c3c">1</span>
<span class="t" style="left:733.44px;top:175px;font-size:13px;line-height:19px;color:#3c3c3c">2</span>
<svg style="left:749.2px;top:182px" width="8.5" height="4.5" viewBox="0 0 8.5 4.5"><path d="M4.25 0L8.5 4.5H0z" fill="#6cc04a"/></svg>
<span class="t" style="left:764.85px;top:175px;font-size:13px;line-height:19px;color:#6cc04a;letter-spacing:0.975px">24</span>
<span class="t" style="left:736.61px;top:216px;font-size:13px;line-height:19px;color:#3c3c3c">1</span>
<svg style="left:753px;top:222.5px" width="8.5" height="4.5" viewBox="0 0 8.5 4.5"><path d="M4.25 0L8.5 4.5H0z" fill="#6cc04a"/></svg>
<span class="t" style="left:768.11px;top:216px;font-size:13px;line-height:19px;color:#6cc04a">1</span>
<svg style="left:733px;top:259px" width="10" height="13" viewBox="0 0 10 13"><path d="M5 .7C2.6 .7 .7 2.6 .7 4.9c0 2.6 2.5 5.2 4.3 7.3 1.8-2.1 4.3-4.7 4.3-7.3C9.3 2.6 7.4 .7 5 .7z" fill="none" stroke="#9a9a9a" stroke-width="1.3"/><circle cx="5" cy="4.8" r="1.9" fill="#9a9a9a"/></svg>
<span class="t" style="left:752.61px;top:256px;font-size:13px;line-height:19px;color:#3c3c3c">1</span>
<span class="t" style="left:753.09px;top:297px;font-size:13px;line-height:19px;color:#3c3c3c">2</span>
<span class="t" style="left:752.61px;top:337px;font-size:13px;line-height:19px;color:#3c3c3c">1</span>
<svg style="left:733px;top:370px" width="10" height="13" viewBox="0 0 10 13"><path d="M5 .7C2.6 .7 .7 2.6 .7 4.9c0 2.6 2.5 5.2 4.3 7.3 1.8-2.1 4.3-4.7 4.3-7.3C9.3 2.6 7.4 .7 5 .7z" fill="none" stroke="#9a9a9a" stroke-width="1.3"/><circle cx="5" cy="4.8" r="1.9" fill="#9a9a9a"/></svg>
<span class="t" style="left:752.61px;top:367px;font-size:13px;line-height:19px;color:#3c3c3c">1</span>
<svg style="left:733px;top:410px" width="10" height="13" viewBox="0 0 10 13"><path d="M5 .7C2.6 .7 .7 2.6 .7 4.9c0 2.6 2.5 5.2 4.3 7.3 1.8-2.1 4.3-4.7 4.3-7.3C9.3 2.6 7.4 .7 5 .7z" fill="none" stroke="#9a9a9a" stroke-width="1.3"/><circle cx="5" cy="4.8" r="1.9" fill="#9a9a9a"/></svg>
<span class="t" style="left:752.61px;top:407px;font-size:13px;line-height:19px;color:#3c3c3c">1</span>
<svg style="left:842px;top:219px" width="10" height="13" viewBox="0 0 10 13"><path d="M5 .7C2.6 .7 .7 2.6 .7 4.9c0 2.6 2.5 5.2 4.3 7.3 1.8-2.1 4.3-4.7 4.3-7.3C9.3 2.6 7.4 .7 5 .7z" fill="none" stroke="#9a9a9a" stroke-width="1.3"/><circle cx="5" cy="4.8" r="1.9" fill="#9a9a9a"/></svg>
<span class="t" style="left:861.78px;top:216px;font-size:13px;line-height:19px;color:#3c3c3c">4</span>
<svg style="left:877.5px;top:223.3px" width="8" height="4.7" viewBox="0 0 8 4.7"><path d="M0 0h8L4 4.7z" fill="#e0201c"/></svg>
<span class="t" style="left:893.11px;top:216px;font-size:13px;line-height:19px;color:#e53935">1</span>
<svg style="left:844.5px;top:341px" width="17" height="11" viewBox="0 0 17 11"><path d="M8.5 0.7L16.2 3.3 8.5 5.9 0.8 3.3z" fill="none" stroke="#9a9a9a" stroke-width="1.3" stroke-linejoin="round"/><path d="M4.3 4.8v3.1c0 1.1 1.9 2 4.2 2s4.2-.9 4.2-2V4.8" fill="none" stroke="#9a9a9a" stroke-width="1.3"/><path d="M2.2 3.8v5.4" fill="none" stroke="#9a9a9a" stroke-width="1.3"/></svg>
<span class="t" style="left:867.21px;top:337px;font-size:13px;line-height:19px;color:#3c3c3c">1</span>
<svg style="left:882.8px;top:343.2px" width="8" height="8" viewBox="0 0 8 8"><path d="M4 0v8M0 4h8" stroke="#6cc04a" stroke-width="1.3"/></svg>
<svg style="left:848.2px;top:410px" width="10" height="13" viewBox="0 0 10 13"><path d="M5 .7C2.6 .7 .7 2.6 .7 4.9c0 2.6 2.5 5.2 4.3 7.3 1.8-2.1 4.3-4.7 4.3-7.3C9.3 2.6 7.4 .7 5 .7z" fill="none" stroke="#9a9a9a" stroke-width="1.3"/><circle cx="5" cy="4.8" r="1.9" fill="#9a9a9a"/></svg>
<span class="t" style="left:868.04px;top:407px;font-size:13px;line-height:19px;color:#3c3c3c">2</span>
<svg style="left:882.8px;top:413.2px" width="8" height="8" viewBox="0 0 8 8"><path d="M4 0v8M0 4h8" stroke="#6cc04a" stroke-width="1.3"/></svg>
<svg style="left:973px;top:340px" width="10" height="13" viewBox="0 0 10 13"><path d="M5 .7C2.6 .7 .7 2.6 .7 4.9c0 2.6 2.5 5.2 4.3 7.3 1.8-2.1 4.3-4.7 4.3-7.3C9.3 2.6 7.4 .7 5 .7z" fill="none" stroke="#9a9a9a" stroke-width="1.3"/><circle cx="5" cy="4.8" r="1.9" fill="#9a9a9a"/></svg>
<span class="t" style="left:992.21px;top:337px;font-size:13px;line-height:19px;color:#3c3c3c">1</span>
<svg style="left:1007.6px;top:343.2px" width="8" height="8" viewBox="0 0 8 8"><path d="M4 0v8M0 4h8" stroke="#6cc04a" stroke-width="1.3"/></svg>
<svg style="left:973px;top:410px" width="10" height="13" viewBox="0 0 10 13"><path d="M5 .7C2.6 .7 .7 2.6 .7 4.9c0 2.6 2.5 5.2 4.3 7.3 1.8-2.1 4.3-4.7 4.3-7.3C9.3 2.6 7.4 .7 5 .7z" fill="none" stroke="#9a9a9a" stroke-width="1.3"/><circle cx="5" cy="4.8" r="1.9" fill="#9a9a9a"/></svg>
<span class="t" style="left:993.09px;top:407px;font-size:13px;line-height:19px;color:#3c3c3c">2</span>
<svg style="left:1007.6px;top:413.2px" width="8" height="8" viewBox="0 0 8 8"><path d="M4 0v8M0 4h8" stroke="#6cc04a" stroke-width="1.3"/></svg>
</div>
</div>
<div id="chat" class="abs"><svg style="left:11px;top:11px" width="19" height="19" viewBox="0 0 19 19"><path d="M9 1.2a7.6 7.6 0 1 0 4.3 13.9l3.9 1.6-1.3-3.7A7.6 7.6 0 0 0 9 1.2z" fill="none" stroke="#fff" stroke-width="1.1" stroke-linejoin="round"/><path d="M5.3 7.7h7.4M5.3 10.2h7.4" stroke="#fff" stroke-width="1.1"/></svg></div>
</body>
</html>
